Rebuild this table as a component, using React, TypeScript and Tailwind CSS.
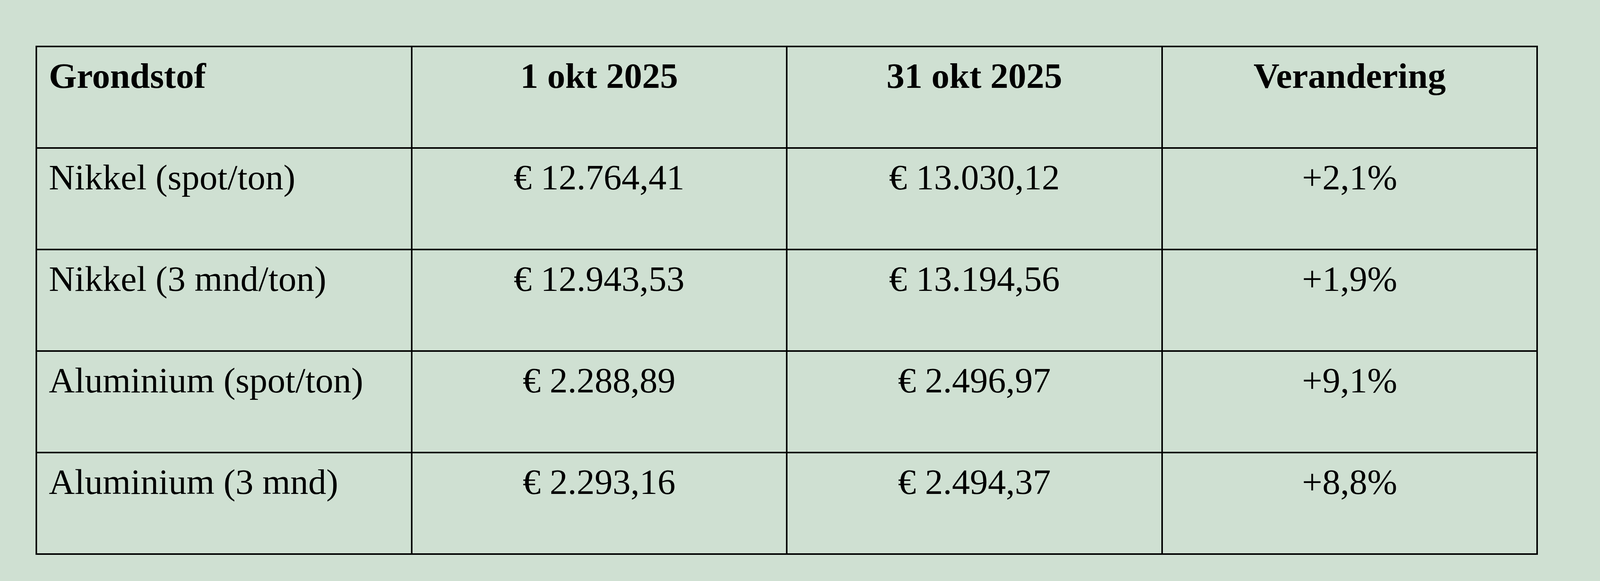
const rows = [
  { name: 'Nikkel (spot/ton)', start: '€ 12.764,41', end: '€ 13.030,12', change: '+2,1%' },
  { name: 'Nikkel (3 mnd/ton)', start: '€ 12.943,53', end: '€ 13.194,56', change: '+1,9%' },
  { name: 'Aluminium (spot/ton)', start: '€ 2.288,89', end: '€ 2.496,97', change: '+9,1%' },
  { name: 'Aluminium (3 mnd)', start: '€ 2.293,16', end: '€ 2.494,37', change: '+8,8%' },
]

export default function App() {
  return (
    <div className="min-h-screen bg-[#cfe0d2] pl-[2.22%] pt-[117px] font-['Liberation_Serif',_'Times_New_Roman',_serif] text-black">
      <table className="w-[96.04%] table-fixed border-collapse border-4 border-black text-[92px] leading-[106px]">
        <thead>
          <tr className="h-[260px]">
            <th className="border-4 border-black pl-[30px] pt-[20px] text-left align-top font-bold">
              Grondstof
            </th>
            <th className="border-4 border-black pt-[20px] text-center align-top font-bold">
              1 okt 2025
            </th>
            <th className="border-4 border-black pt-[20px] text-center align-top font-bold">
              31 okt 2025
            </th>
            <th className="border-4 border-black pt-[20px] text-center align-top font-bold">
              Verandering
            </th>
          </tr>
        </thead>
        <tbody>
          {rows.map((row) => (
            <tr key={row.name} className="h-[260px]">
              <td className="border-4 border-black pl-[30px] pt-[20px] align-top">
                {row.name}
              </td>
              <td className="border-4 border-black pt-[20px] text-center align-top">
                {row.start}
              </td>
              <td className="border-4 border-black pt-[20px] text-center align-top">
                {row.end}
              </td>
              <td className="border-4 border-black pt-[20px] text-center align-top">
                {row.change}
              </td>
            </tr>
          ))}
        </tbody>
      </table>
    </div>
  )
}
